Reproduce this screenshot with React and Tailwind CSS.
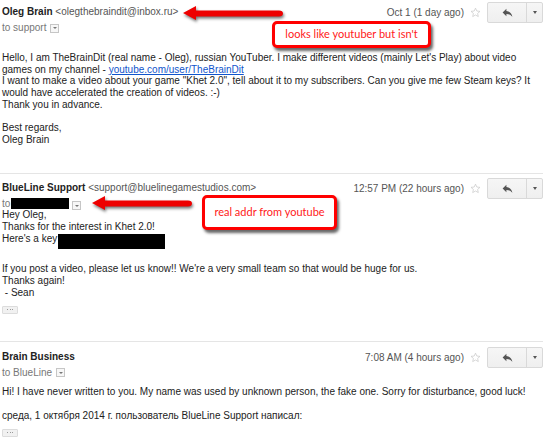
import React from "react";

function Star(){
  return(
    <svg width="11" height="11" viewBox="0 0 24 24" className="shrink-0">
      <path d="M12 2.5l2.9 6.3 6.9.7-5.2 4.6 1.5 6.8L12 17.4l-6.1 3.5 1.5-6.8L2.2 9.5l6.9-.7z" fill="none" stroke="#c9c9c9" strokeWidth="1.6" strokeLinejoin="round"/>
    </svg>
  );
}

function ReplyButton(){
  return(
    <div className="flex h-[21px] rounded-[2px] border border-[#d9d9d9] bg-gradient-to-b from-[#f6f6f6] to-[#efefef]">
      <div className="flex w-[39px] items-center justify-center border-r border-[#d9d9d9]">
        <svg width="13" height="13" viewBox="0 0 24 24">
          <path d="M10 9V5l-7 7 7 7v-4.1c5 0 8.5 1.6 11 5.1-1-5-4-10-11-11z" fill="#555"/>
        </svg>
      </div>
      <div className="flex w-[15px] items-center justify-center">
        <div className="h-0 w-0 border-x-[2.5px] border-t-[3px] border-x-transparent border-t-[#555]" />
      </div>
    </div>
  );
}

function SmallDrop(){
  return(
    <span className="ml-[4px] inline-flex h-[9px] w-[9px] items-center justify-center border border-[#c6c6c6] bg-[#f7f7f7] align-[-1px]">
      <span className="h-0 w-0 border-x-[2px] border-t-[2.5px] border-x-transparent border-t-[#777]" />
    </span>
  );
}

function MoreButton(){
  return(
    <div className="flex h-[8px] w-[16px] items-center justify-center gap-[1.5px] rounded-[1px] border border-[#dcdcdc] bg-[#f1f1f1]">
      <span className="h-[1px] w-[1px] bg-[#999]" />
      <span className="h-[1px] w-[1px] bg-[#999]" />
      <span className="h-[1px] w-[1px] bg-[#999]" />
    </div>
  );
}

function Header({name, email, date, to}){
  return(
    <div className="flex items-start justify-between">
      <div className="pt-[4px]">
        <div className="h-[12px] leading-[12px] whitespace-nowrap">
          <span className="font-bold text-[#222]">{name}</span>
          {email && <span className="text-[#555]"> {email}</span>}
        </div>
        <div className="mt-[4px] flex h-[12px] items-center leading-[12px] whitespace-nowrap text-[#777]">
          {to}
        </div>
      </div>
      <div className="flex h-[21px] items-center gap-[6px]">
        <span className="whitespace-nowrap text-[#555]">{date}</span>
        <Star/>
        <ReplyButton/>
      </div>
    </div>
  );
}

function Arrow({className}){
  return(
    <svg width="106" height="22" viewBox="0 0 106 22" className={"absolute drop-shadow-[1px_2px_1.5px_rgba(0,0,0,0.55)] " + className}>
      <path d="M3 10 L16 3 L16 7.5 L99 7.5 Q103 7.5 103 10.5 Q103 13.5 99 13.5 L16 13.5 L16 17 Z" fill="#ee0000"/>
    </svg>
  );
}

export default function App(){
  return(
    <div className="relative h-[443px] w-[549px] overflow-hidden bg-white font-['Liberation_Sans',Arial,sans-serif] text-[10px] text-[#222]">

      <div className="w-[543px]">

        {/* MESSAGE 1 */}
        <div className="border-b border-[#e5e5e5] pt-[2px] pb-[27px] pl-[2px]">
          <Header
            name="Oleg Brain"
            email="<olegthebraindit@inbox.ru>"
            date="Oct 1 (1 day ago)"
            to={<>to support<SmallDrop/></>}
          />
          <div className="mt-[18px] leading-[11.7px] whitespace-nowrap">
            <div>Hello, I am TheBrainDit (real name - Oleg), russian YouTuber. I make different videos (mainly Let's Play) about video</div>
            <div>games on my channel - <span className="text-[#1155cc] underline">youtube.com/user/TheBrainDit</span></div>
            <div>I want to make a video about your game "Khet 2.0", tell about it to my subscribers. Can you give me few Steam keys? It</div>
            <div>would have accelerated the creation of videos. :-)</div>
            <div>Thank you in advance.</div>
            <div className="h-[11.7px]" />
            <div>Best regards,</div>
            <div>Oleg Brain</div>
          </div>
        </div>

        {/* MESSAGE 2 */}
        <div className="border-b border-[#e5e5e5] pt-[4px] pb-[27px] pl-[2px]">
          <Header
            name="BlueLine Support"
            email="<support@bluelinegamestudios.com>"
            date="12:57 PM (22 hours ago)"
            to={<>to<span className="ml-[1px] inline-block h-[11px] w-[58px] bg-black" /><span className="-ml-[1px]"><SmallDrop/></span></>}
          />
          <div className="-mt-[1px] leading-[12px] whitespace-nowrap">
            <div>Hey Oleg,</div>
            <div>Thanks for the interest in Khet 2.0!</div>
            <div className="relative">Here's a key<span className="absolute top-[1px] left-[56px] h-[15px] w-[107px] bg-black" /></div>
            <div className="h-[18px]" />
            <div>If you post a video, please let us know!! We're a very small team so that would be huge for us.</div>
            <div>Thanks again!</div>
            <div>&nbsp;- Sean</div>
          </div>
          <div className="mt-[7px]">
            <MoreButton/>
          </div>
        </div>

        {/* MESSAGE 3 */}
        <div className="pt-[5px] pl-[2px]">
          <Header
            name="Brain Business"
            date="7:08 AM (4 hours ago)"
            to={<>to BlueLine<SmallDrop/></>}
          />
          <div className="mt-[7px] leading-[12px] whitespace-nowrap">
            <div>Hi! I have never written to you. My name was used by unknown person, the fake one. Sorry for disturbance, good luck!</div>
            <div className="mt-[12px]">среда, 1 октября 2014 г. пользователь BlueLine Support написал:</div>
          </div>
          <div className="mt-[7px]">
            <MoreButton/>
          </div>
        </div>

      </div>

      {/* ANNOTATIONS */}
      <Arrow className="left-[180px] top-[3px]"/>
      <div className="absolute left-[272px] top-[21px] flex h-[27px] w-[159px] items-center justify-center whitespace-nowrap rounded-[5px] border-[3px] border-[#ff0000] bg-white font-['Lato',sans-serif] text-[11px] text-[#ff2020] shadow-[2px_3px_3px_rgba(0,0,0,0.6)]">
        looks like youtuber but isn't
      </div>

      <Arrow className="left-[89px] top-[193px]"/>
      <div className="absolute left-[202px] top-[195px] flex h-[35px] w-[135px] items-center justify-center whitespace-nowrap rounded-[5px] border-[3px] border-[#ff0000] bg-white font-['Lato',sans-serif] text-[11px] text-[#ff2020] shadow-[2px_3px_3px_rgba(0,0,0,0.6)]">
        real addr from youtube
      </div>

    </div>
  );
}
